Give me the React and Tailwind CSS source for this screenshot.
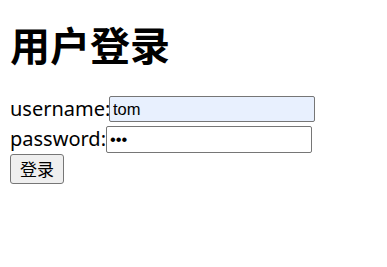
export default function App() {
  return (
    <div className="min-h-[267px] bg-white px-[10px] text-black font-['Segoe_UI','Noto_Sans','Noto_Sans_CJK_SC',sans-serif]">
      <h1 className="pt-[24px] h-[64px] text-[40px] leading-[40px] font-bold font-['Noto_Sans_CJK_SC',sans-serif]">
        用户登录
      </h1>
      <form className="mt-[30px] text-[20px]">
        <div className="flex h-[30px] items-center">
          <span className="w-[99px] leading-none">username:</span>
          <input
            type="text"
            defaultValue="tom"
            className="h-[26px] w-[206px] rounded-[2px] border border-[#767676] bg-[#e8f0fe] px-[3px] text-[16.5px] font-['Liberation_Sans',sans-serif] outline-none"
          />
        </div>
        <div className="flex h-[30px] items-center">
          <span className="w-[96px] leading-none">password:</span>
          <input
            type="password"
            defaultValue="123"
            className="h-[27px] w-[206px] rounded-[2px] border border-[#767676] bg-white px-[3px] text-[16.5px] font-['Liberation_Sans',sans-serif] outline-none"
          />
        </div>
        <div className="flex h-[30px] items-center">
          <button
            type="button"
            className="h-[30px] w-[54px] rounded-[3px] border border-[#767676] bg-[#efefef] text-[17px] font-['Noto_Sans_CJK_SC',sans-serif]"
          >
            登录
          </button>
        </div>
      </form>
    </div>
  );
}
